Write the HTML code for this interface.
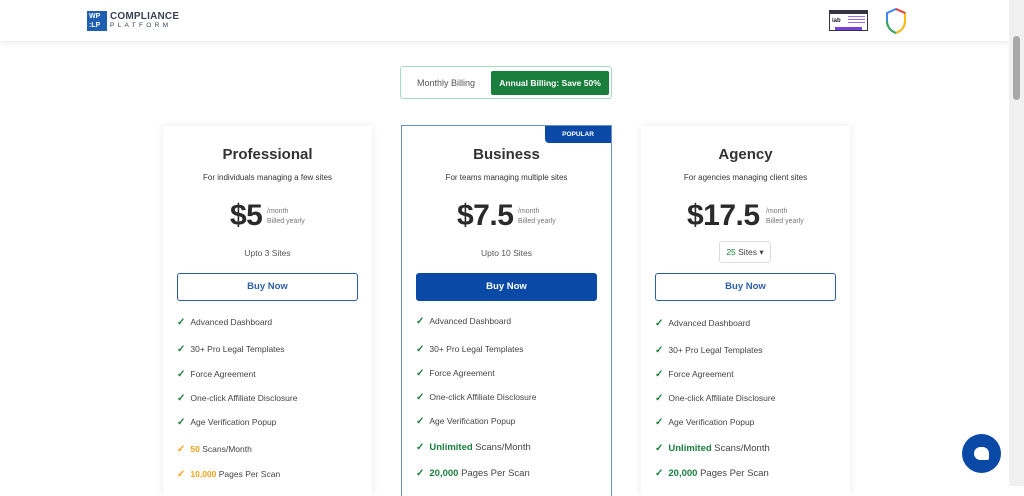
<!DOCTYPE html>
<html><head><style>
*{margin:0;padding:0;box-sizing:border-box}
body{width:1024px;height:486px;overflow:hidden;background:#fff;font-family:"Liberation Sans",Arial,sans-serif;position:relative;color:#333}
.hdr{position:absolute;left:0;top:0;width:1009px;height:41px;background:#fff;box-shadow:0 2px 6px rgba(0,0,0,.08)}
.sb{position:absolute;right:0;top:0;width:15px;height:486px;background:#f1f1f1}
.sb div{position:absolute;left:4px;top:36px;width:7px;height:64px;background:#a8a8a8;border-radius:4px}
.tog{position:absolute;left:400px;top:66px;width:212px;height:33px;border:1px solid #a8dcc0;border-radius:3px}
.tog .m{position:absolute;left:16px;top:11px;font-size:9px;color:#555}
.tog .a{position:absolute;left:90px;top:4px;width:118px;height:24px;background:#1a7f3c;border-radius:2px;color:#fff;font-size:8.5px;font-weight:bold;text-align:center;line-height:24px}
.card{position:absolute;top:126px;width:209px;height:370px;background:#fff;box-shadow:0 0 8px rgba(0,0,0,.08);text-align:center}
.card.b{box-shadow:0 0 0 1px #6a8fc8}
.t{position:absolute;left:0;right:0;top:20px;font-size:15px;font-weight:bold;color:#333}
.s{position:absolute;left:0;right:0;top:47px;font-size:8px;color:#333}
.p{position:absolute;top:73px;font-size:30px;font-weight:bold;color:#2a2a2a;letter-spacing:-.5px}
.pm{position:absolute;top:81px;font-size:7px;color:#777;text-align:left;line-height:10px}
.u{position:absolute;left:0;right:0;top:122px;font-size:8.5px;color:#555}
.btn{position:absolute;left:14px;width:181px;top:147px;height:28px;border:1px solid #2c5ea8;border-radius:3px;color:#2c5ea8;font-size:9.5px;font-weight:bold;line-height:26px}
.card.b .btn{background:#0a4aa6;color:#fff;border-color:#0a4aa6}
.f{position:absolute;left:14px;font-size:8.5px;color:#444;text-align:left;white-space:nowrap}
.f i{font-style:normal;color:#1a7f3c;font-weight:bold;margin-right:5px;font-size:10px}
.f.o i,.f.o b{color:#f2a31b}
.f.g b{color:#1a7f3c}
.f.g{font-size:9.5px}
.pop{position:absolute;right:0;top:0;width:66px;height:17px;background:#0a4aa6;color:#fff;font-size:6.5px;font-weight:bold;line-height:17px;border-radius:0 0 0 4px}
.chat{position:absolute;left:962px;top:434px;width:39px;height:39px;border-radius:50%;background:#0a4aa6}
.chat div{position:absolute;left:12px;top:13px;width:15px;height:13px;background:#fff;border-radius:7px 7px 2px 7px}
</style></head><body>
<div class="hdr">
 <div style="position:absolute;left:87px;top:11px;width:20px;height:20px;background:#1f5eb0;color:#fff;font-size:7px;font-weight:bold;line-height:9px;padding:1px 2px">WP<br>:LP</div>
 <div style="position:absolute;left:110px;top:11px;font-size:10px;font-weight:bold;color:#3a4256;letter-spacing:.2px">COMPLIANCE</div>
 <div style="position:absolute;left:110px;top:22px;font-size:6.5px;color:#3a4256;letter-spacing:3.3px">PLATFORM</div>
 <div style="position:absolute;left:829px;top:10px;width:39px;height:21px;border:1px solid #334;background:#fff"><div style="position:absolute;left:0;right:0;top:0;height:3px;background:#334"></div><div style="position:absolute;left:5px;right:5px;bottom:0;height:3px;background:#7b3fe0"></div><div style="position:absolute;left:2px;top:7px;font-size:6px;font-weight:bold;color:#223">iab</div><div style="position:absolute;left:18px;top:5px;width:17px;height:9px;background:repeating-linear-gradient(#9b6cf0 0 1px,#fff 1px 3px)"></div></div>
 <svg style="position:absolute;left:884px;top:8px" width="24" height="26" viewBox="0 0 24 26"><path d="M12 1L3 5v8c0 6 4 10 9 12 5-2 9-6 9-12V5z" fill="#fff" stroke="#4285f4" stroke-width="2"/><path d="M3 13c0 6 4 10 9 12" fill="none" stroke="#34a853" stroke-width="2"/><path d="M21 5v8c0 6-4 10-9 12" fill="none" stroke="#fbbc05" stroke-width="2"/><path d="M12 1l9 4" stroke="#ea4335" stroke-width="2"/></svg>
</div>
<div class="sb"><div></div></div>
<div class="tog"><span class="m">Monthly Billing</span><div class="a">Annual Billing: Save 50%</div></div>

<div class="card" style="left:163px">
 <div class="t">Professional</div><div class="s">For individuals managing a few sites</div>
 <div class="p" style="left:67px">$5</div><div class="pm" style="left:104px">/month<br>Billed yearly</div>
 <div class="u">Upto 3 Sites</div><div class="btn">Buy Now</div>
 <div class="f" style="top:191px"><i>✓</i>Advanced Dashboard</div>
 <div class="f" style="top:218px"><i>✓</i>30+ Pro Legal Templates</div>
 <div class="f" style="top:243px"><i>✓</i>Force Agreement</div>
 <div class="f" style="top:267px"><i>✓</i>One-click Affiliate Disclosure</div>
 <div class="f" style="top:291px"><i>✓</i>Age Verification Popup</div>
 <div class="f o" style="top:318px"><i>✓</i><b>50</b> Scans/Month</div>
 <div class="f o" style="top:343px"><i>✓</i><b>10,000</b> Pages Per Scan</div>
</div>

<div class="card b" style="left:402px">
 <div class="pop">POPULAR</div>
 <div class="t">Business</div><div class="s">For teams managing multiple sites</div>
 <div class="p" style="left:55px">$7.5</div><div class="pm" style="left:116px">/month<br>Billed yearly</div>
 <div class="u">Upto 10 Sites</div><div class="btn" style="left:14px">Buy Now</div>
 <div class="f" style="top:190px"><i>✓</i>Advanced Dashboard</div>
 <div class="f" style="top:218px"><i>✓</i>30+ Pro Legal Templates</div>
 <div class="f" style="top:242px"><i>✓</i>Force Agreement</div>
 <div class="f" style="top:266px"><i>✓</i>One-click Affiliate Disclosure</div>
 <div class="f" style="top:290px"><i>✓</i>Age Verification Popup</div>
 <div class="f g" style="top:316px"><i>✓</i><b>Unlimited</b> Scans/Month</div>
 <div class="f g" style="top:342px"><i>✓</i><b>20,000</b> Pages Per Scan</div>
</div>

<div class="card" style="left:641px">
 <div class="t">Agency</div><div class="s">For agencies managing client sites</div>
 <div class="p" style="left:46px">$17.5</div><div class="pm" style="left:125px">/month<br>Billed yearly</div>
 <div style="position:absolute;left:78px;top:115px;width:52px;height:22px;border:1px solid #ddd;border-radius:3px;font-size:8.5px;line-height:20px;color:#444"><span style="color:#1a7f3c">25</span> Sites ▾</div>
 <div class="btn">Buy Now</div>
 <div class="f" style="top:192px"><i>✓</i>Advanced Dashboard</div>
 <div class="f" style="top:219px"><i>✓</i>30+ Pro Legal Templates</div>
 <div class="f" style="top:243px"><i>✓</i>Force Agreement</div>
 <div class="f" style="top:267px"><i>✓</i>One-click Affiliate Disclosure</div>
 <div class="f" style="top:291px"><i>✓</i>Age Verification Popup</div>
 <div class="f g" style="top:317px"><i>✓</i><b>Unlimited</b> Scans/Month</div>
 <div class="f g" style="top:342px"><i>✓</i><b>20,000</b> Pages Per Scan</div>
</div>
<div class="chat"><div></div></div>
</body></html>
